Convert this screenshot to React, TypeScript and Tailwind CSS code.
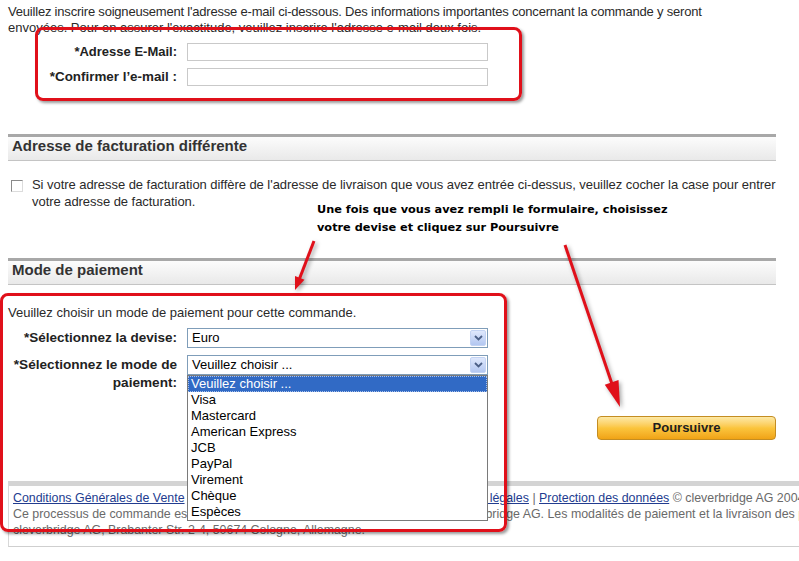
import type { ReactNode } from 'react'

const PAYMENT_METHODS = [
  'Veuillez choisir ...',
  'Visa',
  'Mastercard',
  'American Express',
  'JCB',
  'PayPal',
  'Virement',
  'Chèque',
  'Espèces',
]

function SectionHeader({ title }: { title: string }) {
  return (
    <div className="h-[27px] border-t-[3px] border-b border-t-[#a8a8a8] border-b-[#c4c4c4] bg-gradient-to-b from-[#fcfcfc] to-[#e9e9e9] pl-1 text-[15px] leading-[18px] font-bold text-[#333]">
      {title}
    </div>
  )
}

function FormRow({ label, children, labelClass = '' }: { label: ReactNode; children: ReactNode; labelClass?: string }) {
  return (
    <div className="flex items-center">
      <div className={`w-[169px] text-right font-bold whitespace-nowrap text-[#222] ${labelClass}`}>{label}</div>
      <div className="ml-[10px]">{children}</div>
    </div>
  )
}

function TextInput() {
  return <div className="h-[18px] w-[301px] border border-[#c9c9c9] bg-white" />
}

function Chevron() {
  return (
    <svg width="9" height="6" viewBox="0 0 9 6">
      <path d="M1 1 L4.5 4.5 L8 1" fill="none" stroke="#4b5f86" strokeWidth="1.8" />
    </svg>
  )
}

function FakeSelect({ value }: { value: string }) {
  return (
    <div className="flex h-5 w-[301px] items-center border border-[#7f9db9] bg-white pr-[1px] pl-1">
      <span className="flex-1 text-[13px] text-black">{value}</span>
      <span className="flex h-4 w-4 items-center justify-center rounded-[2px] border border-[#c3d3f3] bg-gradient-to-b from-[#dfe8fc] to-[#b3c7f1]">
        <Chevron />
      </span>
    </div>
  )
}

function Arrows() {
  return (
    <svg
      className="pointer-events-none absolute inset-0"
      width="799"
      height="561"
      style={{ filter: 'drop-shadow(2px 2px 2px rgba(0,0,0,0.35))' }}
    >
      <line x1="314" y1="241" x2="299" y2="280" stroke="#e0101a" strokeWidth="3" />
      <polygon points="295,290 304.5,279.7 295,276" fill="#e0101a" />
      <line x1="565" y1="245" x2="612" y2="384" stroke="#e0101a" strokeWidth="3" />
      <polygon points="620,407 618.5,380 604.8,384.8" fill="#e0101a" />
    </svg>
  )
}

export default function App() {
  return (
    <div className="relative h-[561px] w-[799px] overflow-hidden bg-white font-['Liberation_Sans',Arial,sans-serif] text-[13px] leading-4 text-[#2a2a2a]">
      <div className="ml-2 w-[768px]">
        {/* E-mail */}
        <p className="pt-1 whitespace-nowrap">
          <span className="tracking-[-0.2px]">
            Veuillez inscrire soigneusement l'adresse e-mail ci-dessous. Des informations importantes concernant la commande y seront
          </span>
          <br />
          envoyées. Pour en assurer l'exactitude, veuillez inscrire l'adresse e-mail deux fois.
        </p>
        <div className="mt-[7px] flex flex-col gap-[7px]">
          <FormRow label="*Adresse E-Mail:">
            <TextInput />
          </FormRow>
          <FormRow label="*Confirmer l’e-mail :" labelClass="text-[13.4px]">
            <TextInput />
          </FormRow>
        </div>

        {/* Billing address */}
        <div className="mt-12">
          <SectionHeader title="Adresse de facturation différente" />
        </div>
        <div className="mt-[15px] flex leading-[17px]">
          <span className="mt-1 ml-[3px] h-3 w-3 shrink-0 border border-t-[#8a8a8a] border-l-[#8a8a8a] border-r-[#dcdcdc] border-b-[#dcdcdc] bg-white" />
          <p className="ml-[9px] tracking-[-0.05px] whitespace-nowrap">
            Si votre adresse de facturation diffère de l'adresse de livraison que vous avez entrée ci-dessus, veuillez cocher la case pour entrer
            <br />
            votre adresse de facturation.
          </p>
        </div>

        {/* Payment */}
        <div className="mt-12">
          <SectionHeader title="Mode de paiement" />
        </div>
        <p className="mt-5 whitespace-nowrap">Veuillez choisir un mode de paiement pour cette commande.</p>
        <div className="mt-[7px]">
          <FormRow label="*Sélectionnez la devise:" labelClass="text-[13.5px]">
            <FakeSelect value="Euro" />
          </FormRow>
        </div>
        <div className="mt-[7px] flex items-start">
          <div className="w-[169px] pt-[1px] text-right text-[13.6px] leading-[18px] font-bold whitespace-nowrap text-[#222]">
            *Sélectionnez le mode de
            <br />
            paiement:
          </div>
          <div className="relative ml-[10px]">
            <FakeSelect value="Veuillez choisir ..." />
            <ul className="absolute top-full left-0 z-10 w-[301px] border border-[#7a7a7a] bg-white text-[13px] text-black">
              {PAYMENT_METHODS.map((m, i) => (
                <li
                  key={m}
                  className={
                    i === 0
                      ? 'h-4 border border-dotted border-[#a8c0ea] bg-[#316ac5] pl-[2px] leading-[14px] text-white'
                      : 'h-4 pl-[3px] leading-4'
                  }
                >
                  {m}
                </li>
              ))}
            </ul>
          </div>
        </div>
        <div className="mt-6 flex justify-end">
          <button className="h-6 w-[179px] rounded-[4px] border border-[#c48d22] bg-gradient-to-b from-[#fde9a4] via-[#fbc53c] to-[#f0a314] text-[13px] font-bold text-[#1e1e1e]">
            Poursuivre
          </button>
        </div>
      </div>

      {/* Footer */}
      <div className="mt-[41px] ml-2 w-[820px] border-t-[5px] border-b border-l border-t-[#d4d4d4] border-b-[#cfcfcf] border-l-[#d8d8d8] px-[4px] pt-1 pb-2 text-[12.4px] leading-4 whitespace-nowrap text-[#6a6a6a]">
        <p>
          <a href="#" className="text-[#223c8f] underline">Conditions Générales de Vente</a>
          {' | '}
          <a href="#" className="text-[#223c8f] underline">Politique de remboursement</a>
          {' | '}
          <a href="#" className="text-[#223c8f] underline">Aide et FAQ</a>
          {' | '}
          <a href="#" className="text-[#223c8f] underline">Mentions légales</a>
          {' | '}
          <a href="#" className="text-[#223c8f] underline">Protection des données</a>
          {' © cleverbridge AG 2004-2012'}
        </p>
        <p>
          Ce processus de commande est réalisé par notre revendeur en ligne, la société cleverbridge AG. Les modalités de paiement et la livraison des produits
        </p>
        <p>cleverbridge AG, Brabanter Str. 2-4, 50674 Cologne, Allemagne.</p>
      </div>

      {/* Annotations */}
      <div className="absolute top-[27px] left-[35px] h-[74px] w-[487px] rounded-[8px] border-[3px] border-[#e0101a] shadow-[2px_2px_3px_rgba(0,0,0,0.4)]" />
      <div className="absolute top-[293px] left-0 h-[239px] w-[507px] rounded-[8px] border-[3px] border-[#e0101a] shadow-[2px_2px_3px_rgba(0,0,0,0.4)]" />
      <p className="absolute top-[201px] left-[317px] font-['DejaVu_Sans',sans-serif] text-[11.3px] leading-[18px] font-bold whitespace-nowrap text-black">
        Une fois que vous avez rempli le formulaire, choisissez
        <br />
        votre devise et cliquez sur Poursuivre
      </p>
      <Arrows />
    </div>
  )
}
